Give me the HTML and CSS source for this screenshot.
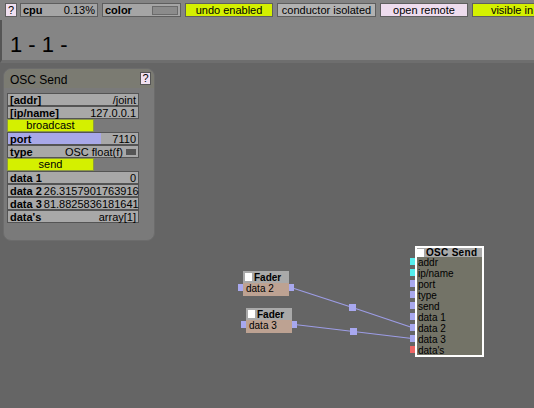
FILE: index.html
```html
<!DOCTYPE html>
<html lang="en">
<head>
  <meta charset="UTF-8">
  <title>Patch 1 - 1</title>
  <link rel="stylesheet" href="styles.css">
</head>
<body>

  <!-- Status bar -->
  <div class="topbar">
    <div class="tb-item tb-help">?</div>
    <div class="tb-item tb-cpu"><b>cpu</b><span>0.13%</span></div>
    <div class="tb-item tb-color"><b>color</b><span class="swatch"></span></div>
    <div class="tb-item tb-on tb-undo">undo enabled</div>
    <div class="tb-item tb-off tb-conductor">conductor isolated</div>
    <div class="tb-item tb-pink tb-remote">open remote</div>
    <div class="tb-item tb-on tb-visible">visible in</div>
  </div>

  <div class="header">
    <span class="patch-title">1 - 1 -</span>
  </div>

  <div class="canvas">

    <!-- Inspector for the OSC Send module -->
    <div class="panel">
      <div class="panel-head">
        <span class="panel-title">OSC Send</span>
        <span class="help-btn">?</span>
      </div>
      <div class="rows">
        <div class="row"><b>[addr]</b><span>/joint</span></div>
        <div class="row"><b>[ip/name]</b><span>127.0.0.1</span></div>
        <div class="btn">broadcast</div>
        <div class="row row-port"><b>port</b><span>7110</span></div>
        <div class="row"><b>type</b><span class="type-val">OSC float(f)<i class="mini"></i></span></div>
        <div class="btn">send</div>
        <div class="row"><b>data 1</b><span>0</span></div>
        <div class="row"><b>data 2</b><span>26.3157901763916</span></div>
        <div class="row"><b>data 3</b><span>81.8825836181641</span></div>
        <div class="row"><b>data's</b><span>array[1]</span></div>
      </div>
    </div>

    <!-- Wires -->
    <svg class="wires" width="534" height="345" viewBox="0 0 534 345">
      <polyline points="291,224.5 352.5,244.5 412,264.5" />
      <polyline points="294.5,261.5 353.5,268.5 412,275.5" />
      <rect x="349" y="241" width="7" height="7" />
      <rect x="350" y="265" width="7" height="7" />
    </svg>

    <!-- Modules -->
    <div class="node fader" style="left: 243px; top: 208px;">
      <div class="node-head"><span class="check"></span>Fader</div>
      <div class="fader-body">data 2</div>
      <span class="port port-in"></span>
      <span class="port port-out"></span>
    </div>

    <div class="node fader" style="left: 246px; top: 245px;">
      <div class="node-head"><span class="check"></span>Fader</div>
      <div class="fader-body">data 3</div>
      <span class="port port-in"></span>
      <span class="port port-out"></span>
    </div>

    <div class="node osc" style="left: 415px; top: 183px;">
      <div class="node-head"><span class="check"></span>OSC Send</div>
      <div class="osc-row"><span class="pin pin-str"></span>addr</div>
      <div class="osc-row"><span class="pin pin-str"></span>ip/name</div>
      <div class="osc-row"><span class="pin"></span>port</div>
      <div class="osc-row"><span class="pin"></span>type</div>
      <div class="osc-row"><span class="pin"></span>send</div>
      <div class="osc-row"><span class="pin"></span>data 1</div>
      <div class="osc-row"><span class="pin"></span>data 2</div>
      <div class="osc-row"><span class="pin"></span>data 3</div>
      <div class="osc-row"><span class="pin pin-arr"></span>data's</div>
    </div>

  </div>

</body>
</html>
```

FILE: styles.css
```css
body {
  margin: 0;
  width: 534px;
  height: 408px;
  overflow: hidden;
  font-family: "Liberation Sans", Arial, sans-serif;
  background: #656565;
  color: #000;
}

/* Status bar */
.topbar {
  display: flex;
  gap: 4px;
  height: 20px;
  padding: 3px 0 0 5px;
  box-sizing: border-box;
  background: #848484;
  overflow: hidden;
  white-space: nowrap;
}

.tb-item {
  flex: none;
  height: 14px;
  box-sizing: border-box;
  border: 1px solid #5e5e5e;
  font-size: 11px;
  line-height: 12px;
  text-align: center;
}

.tb-help {
  width: 12px;
  margin-right: -1px;
  background: #f0e0f0;
}

.tb-cpu,
.tb-color {
  display: flex;
  justify-content: space-between;
  align-items: center;
  padding: 0 2px;
  background: #a5a5a5;
}

.tb-cpu { width: 78px; }
.tb-color { width: 79px; }

.swatch {
  width: 26px;
  height: 9px;
  box-sizing: border-box;
  background: #8b8b8b;
  border: 1px solid #6a6a6a;
}

.tb-on { background: #d4f000; }
.tb-off { background: #b2b2b2; }
.tb-pink { background: #eedcee; }

.tb-undo { width: 88px; }
.tb-conductor { width: 99px; }
.tb-remote { width: 88px; }
.tb-visible { width: 80px; }

/* Patch title */
.header {
  height: 43px;
  box-sizing: border-box;
  padding: 14px 0 0 8px;
  border-left: 2px solid #555;
  border-bottom: 3px solid #6e6e6e;
  background: #858585;
}

.patch-title {
  font-size: 22px;
  line-height: 22px;
}

/* Canvas */
.canvas {
  position: relative;
  height: 345px;
  padding-top: 5px;
  box-sizing: border-box;
}

.panel {
  margin-left: 3px;
  width: 152px;
  height: 173px;
  box-sizing: border-box;
  background: #7a7a7a;
  border: 1px solid #6c6c6c;
  border-radius: 8px;
}

.panel-head {
  display: flex;
  justify-content: space-between;
  align-items: center;
  height: 19px;
  padding: 0 3px 0 6px;
  background: #7b7b72;
  border-radius: 8px 8px 0 0;
}

.panel-title {
  font-size: 12px;
  padding-top: 2px;
}

.help-btn {
  width: 11px;
  height: 13px;
  box-sizing: border-box;
  background: #f0e0f0;
  border: 1px solid #555;
  font-size: 11px;
  line-height: 11px;
  text-align: center;
}

.rows {
  padding: 5px 0 0 3px;
}

.row {
  display: flex;
  justify-content: space-between;
  align-items: center;
  width: 132px;
  height: 13px;
  box-sizing: border-box;
  padding: 0 2px;
  background: #a8a8a8;
  border: 1px solid #545454;
  font-size: 11px;
  white-space: nowrap;
}

.row span {
  padding-left: 2px;
}

.row-port {
  background: linear-gradient(to right, #a8a8e8 93px, #a8a8a8 93px);
}

.type-val {
  display: flex;
  align-items: center;
}

.mini {
  width: 10px;
  height: 6px;
  margin-left: 3px;
  background: #555;
}

.btn {
  width: 87px;
  height: 13px;
  box-sizing: border-box;
  background: #d4f000;
  border: 1px solid #8c9a40;
  font-size: 11px;
  line-height: 11px;
  text-align: center;
}

/* Wires */
.wires {
  position: absolute;
  left: 0;
  top: 0;
}

.wires polyline {
  fill: none;
  stroke: #9d9de6;
  stroke-width: 1.2;
}

.wires rect {
  fill: #a8a8f0;
}

/* Modules */
.node {
  position: absolute;
  font-size: 10px;
  white-space: nowrap;
}

.node-head {
  display: flex;
  align-items: center;
  height: 12px;
  padding-left: 2px;
  background: #a9a9a9;
  font-weight: bold;
}

.check {
  width: 7px;
  height: 8px;
  margin-right: 2px;
  background: #fff;
}

.fader {
  width: 46px;
}

.fader-body {
  height: 13px;
  line-height: 12px;
  padding-left: 3px;
  background: #bda292;
}

.port {
  position: absolute;
  top: 13px;
  width: 5px;
  height: 7px;
  background: #a8a8ee;
}

.port-in { left: -5px; }
.port-out { right: -5px; }

.osc {
  width: 69px;
  height: 111px;
  box-sizing: border-box;
  border: 2px solid #fff;
  background: #737367;
}

.osc .node-head {
  height: 9px;
  padding-left: 0;
  letter-spacing: 0.3px;
}

.osc-row {
  position: relative;
  height: 11px;
  line-height: 11px;
  padding-left: 1px;
}

.pin {
  position: absolute;
  left: -7px;
  top: 1px;
  width: 5px;
  height: 7px;
  background: #a8a8ee;
}

.pin-str { background: #55eeee; }
.pin-arr { background: #ee6666; }
```
